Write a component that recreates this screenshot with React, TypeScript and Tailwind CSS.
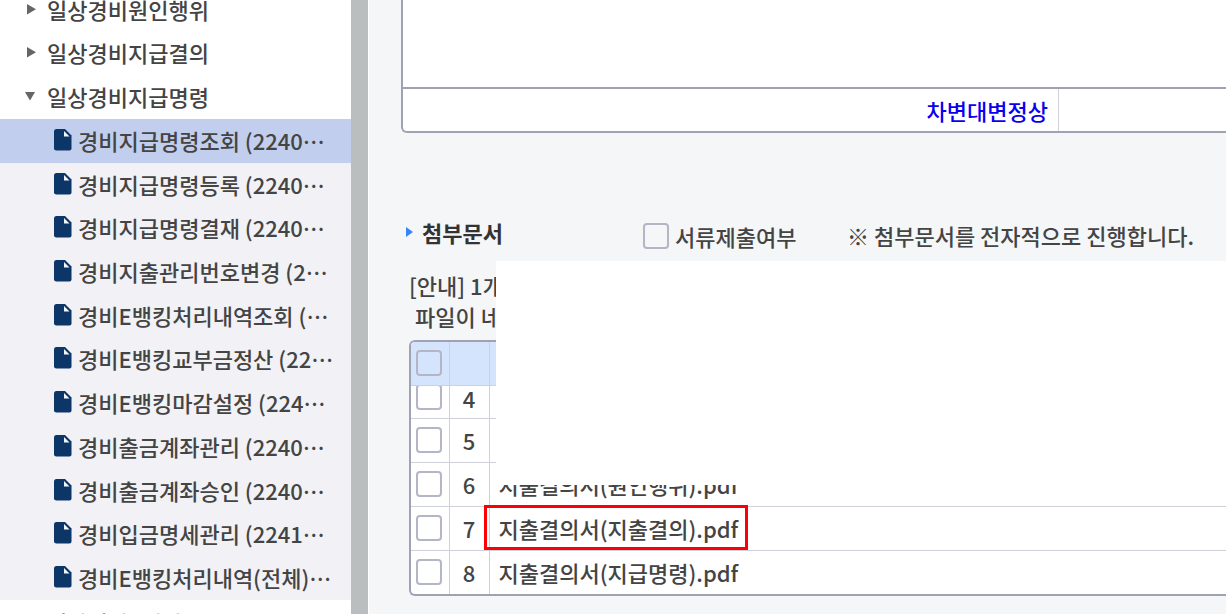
import React from "react";

const groups = [
  { label: "일상경비원인행위", open: false },
  { label: "일상경비지급결의", open: false },
  { label: "일상경비지급명령", open: true },
];

const items = [
  "경비지급명령조회 (2240⋯",
  "경비지급명령등록 (2240⋯",
  "경비지급명령결재 (2240⋯",
  "경비지출관리번호변경 (2⋯",
  "경비E뱅킹처리내역조회 (⋯",
  "경비E뱅킹교부금정산 (22⋯",
  "경비E뱅킹마감설정 (224⋯",
  "경비출금계좌관리 (2240⋯",
  "경비출금계좌승인 (2240⋯",
  "경비입금명세관리 (2241⋯",
  "경비E뱅킹처리내역(전체)⋯",
];

const files = [
  { no: 5, name: "" },
  { no: 6, name: "지출결의서(원인행위).pdf" },
  { no: 7, name: "지출결의서(지출결의).pdf" },
  { no: 8, name: "지출결의서(지급명령).pdf" },
];

function Arrow({ open }: { open: boolean }) {
  return (
    <svg className="h-3 w-3 shrink-0" viewBox="0 0 12 12" fill="#666" aria-hidden="true">
      {open ? <path d="M1 2H11L6 10.500Z" /> : <path d="M3 1V11.500L12 6.200Z" />}
    </svg>
  );
}

function DocIcon() {
  return (
    <svg className="h-[22px] w-[18px] shrink-0" viewBox="0 0 18 22" aria-hidden="true">
      <path d="M2.500 0H11L17.500 6.500V19.500Q17.500 21.500 15.500 21.500H2.500Q0 21.500 0 19.500V2.500Q0 0 2.500 0Z" fill="#0c3568" />
      <path d="M10 2V7.500H15.500Z" fill="#f4f6fb" />
    </svg>
  );
}

function Check({ id, label }: { id: string; label: string }) {
  return (
    <input
      id={id}
      type="checkbox"
      aria-label={label}
      className="block h-[26px] w-[26px] shrink-0 appearance-none rounded-[4px] border-2 border-[#b4b6c6] bg-transparent"
    />
  );
}

export default function App() {
  return (
    <div className="flex h-screen overflow-hidden bg-[#f4f6f8] font-['Noto_Sans_CJK_KR','Noto_Sans',sans-serif] text-[22px] leading-8 font-medium text-[#444]">
      <nav className="w-[351px] shrink-0 overflow-hidden bg-white whitespace-nowrap">
        <ul className="-mt-3 grid h-[131px] auto-rows-fr">
          {groups.map((g) => (
            <li key={g.label}>
              <button type="button" aria-expanded={g.open} className="flex h-full w-full items-center gap-[11px] pb-0.5 pl-6 text-left">
                <Arrow open={g.open} />
                {g.label}
              </button>
            </li>
          ))}
        </ul>
        <ul className="grid h-[481px] auto-rows-fr bg-[#f1f1f6]">
          {items.map((t, i) => (
            <li key={t} className={i === 0 ? "bg-[#c2ceed]" : ""}>
              <a href="#" className="flex h-full items-center gap-1.5 pb-0.5 pl-[54px]">
                <DocIcon />
                {t}
              </a>
            </li>
          ))}
        </ul>
        <button type="button" className="flex h-11 w-full items-center pl-[47px] text-left">
          일상경비E뱅킹
        </button>
      </nav>
      <div className="w-[17px] shrink-0 bg-[#bbbebf]" />

      <main className="relative min-w-0 flex-1 overflow-hidden border-l border-white whitespace-nowrap">
        <section className="ml-8 rounded-bl-[6px] border-b-2 border-l-2 border-[#a0a2b3] bg-white">
          <div className="h-[87px]" />
          <div className="flex h-11 border-t-2 border-[#a0a2b3]">
            <div className="flex w-[656px] items-center justify-end border-r border-[#cfd1d8] pr-2.5 text-[#0a00f0]">
              차변대변정상
            </div>
            <div className="flex-1" />
          </div>
        </section>

        <div className="mt-[85px] ml-[37px] flex h-9 items-center">
          <h2 className="flex w-[237px] items-center gap-2 pb-2 font-bold text-[#333]">
            <svg className="h-3 w-2" viewBox="0 0 8 12" fill="#3b82f6" aria-hidden="true">
              <path d="M0 1V11L7 6Z" />
            </svg>
            첨부문서
          </h2>
          <div className="flex w-[204px] items-center gap-1.5">
            <Check id="submit" label="서류제출여부" />
            <label htmlFor="submit">서류제출여부</label>
          </div>
          <p className="pb-0.5">※ 첨부문서를 전자적으로 진행합니다.</p>
        </div>

        <div className="mt-4 ml-10 leading-[31px]">
          <p>[안내] 1개</p>
          <p className="pl-1.5">파일이 네</p>
        </div>

        <div className="mt-2 ml-10 overflow-hidden rounded-l-[6px] border-2 border-r-0 border-[#a0a2b3] bg-white">
          <table className="w-full table-fixed border-collapse">
            <colgroup>
              <col className="w-[38px]" />
              <col className="w-10" />
              <col />
            </colgroup>
            <thead>
              <tr className="h-[43px] border-b border-[#cfd1d8] bg-[#d4e4fd]">
                <th className="border-r border-[#cfd1d8] pl-[5px]">
                  <Check id="all" label="전체 선택" />
                </th>
                <th className="border-r border-[#cfd1d8]" />
                <th />
              </tr>
            </thead>
            <tbody>
              <tr className="border-b border-[#cfd1d8]">
                <td className="border-r border-[#cfd1d8] pl-[5px]">
                  <div className="flex h-8 flex-col justify-end overflow-hidden pb-2">
                    <Check id="file4" label="4" />
                  </div>
                </td>
                <td className="border-r border-[#cfd1d8] pb-2 text-center leading-6">4</td>
                <td />
              </tr>
              {files.map((f) => (
                <tr key={f.no} className="h-11 border-b border-[#cfd1d8] last:border-b-0">
                  <td className="border-r border-[#cfd1d8] pl-[5px]">
                    <Check id={"file" + f.no} label={String(f.no)} />
                  </td>
                  <td className="border-r border-[#cfd1d8] text-center">{f.no}</td>
                  <td className="pl-[9px]">{f.name}</td>
                </tr>
              ))}
            </tbody>
          </table>
        </div>

        <div className="absolute top-[261px] right-0 bottom-[129px] left-[127px] bg-white" />
        <div className="absolute top-[505px] left-[115px] h-[45px] w-[264px] border-3 border-[#fb0007]" />
      </main>
    </div>
  );
}
